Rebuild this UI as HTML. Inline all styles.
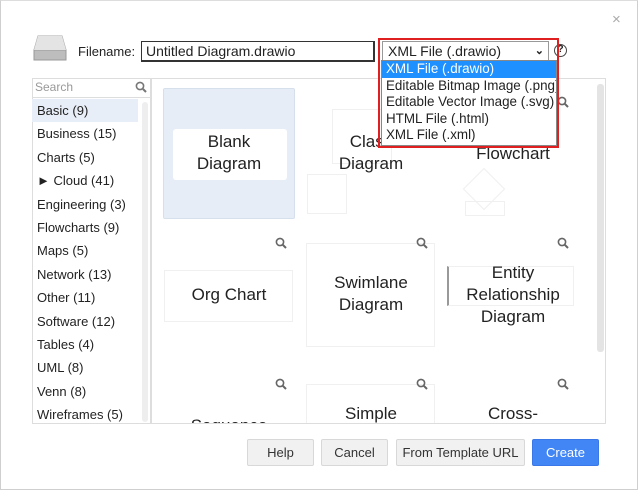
<!DOCTYPE html>
<html><head><style>
*{margin:0;padding:0;box-sizing:border-box}
body{width:640px;height:492px;background:#fff;position:relative;overflow:hidden;font-family:"Liberation Sans",sans-serif;color:#222}
.a{position:absolute}
.lst div{height:23.4px;line-height:23.4px;padding-left:5px;font-size:13px;white-space:nowrap}
.lbl{position:absolute;text-align:center;font-size:17px;line-height:22px;color:#222}
.btn{position:absolute;top:439px;height:27px;border:1px solid #d8d8d8;background:#f1f1f1;font-size:13px;line-height:25px;text-align:center;color:#333;border-radius:2px}
.mag{position:absolute;width:12px;height:12px}
.ghost{position:absolute;border:1px solid #f0f0f0}
.dd div{white-space:nowrap;padding-left:4px;height:16.6px}
</style></head><body>
<div class="a" style="left:0;top:0;width:638px;height:490px;border:1px solid #cfcfcf;border-top-color:#ddd"></div>
<div class="a" style="left:612px;top:11px;font-size:15px;color:#aaa">×</div>
<svg class="a" style="left:32px;top:34px" width="36" height="28" viewBox="0 0 36 28"><path d="M6 2 H30 L34 16 V26 H2 V16 Z" fill="#d4d4d4" stroke="#aaa"/><rect x="2" y="16" width="32" height="10" fill="#bdbdbd" stroke="#999"/><path d="M6 2 L2 16 H34 L30 2Z" fill="#e4e4e4"/></svg>
<div class="a" style="left:78px;top:44px;font-size:13px">Filename:</div>
<div class="a" style="left:141px;top:41px;width:234px;height:21px;border:1px solid #333;border-width:1px 2px 2px 1px;font-size:14px;line-height:18px;padding-left:4px">Untitled Diagram.drawio</div>
<div class="a" style="left:382px;top:41px;width:167px;height:20px;border:1px solid #999;font-size:14px;line-height:18px;padding-left:5px">XML File (.drawio)<span style="position:absolute;right:4px;top:0;font-size:11px;font-weight:bold">&#8964;</span></div>
<div class="a" style="left:554px;top:44px;width:13px;height:13px;border:1.5px solid #444;border-radius:50%;font-size:10px;line-height:10px;text-align:center;font-weight:bold">?</div>
<div class="a" style="left:32px;top:78px;width:119px;height:346px;border:1px solid #ddd"></div>
<div class="a" style="left:35px;top:80px;font-size:12px;color:#999">Search</div>
<svg class="a" style="left:135px;top:81px" width="12" height="12"><circle cx="5" cy="5" r="3.6" stroke="#777" stroke-width="1.6" fill="none"/><path d="M8 8 L11 11" stroke="#777" stroke-width="2"/></svg>
<div class="a" style="left:32px;top:97px;width:119px;border-top:1px solid #ddd"></div>
<div class="a" style="left:142px;top:102px;width:6px;height:320px;background:#eee;border-radius:3px"></div>
<div class="a lst" style="left:32px;top:99px;width:106px">
<div style="background:#e8eef7">Basic (9)</div><div>Business (15)</div><div>Charts (5)</div><div>&#9658; Cloud (41)</div><div>Engineering (3)</div><div>Flowcharts (9)</div><div>Maps (5)</div><div>Network (13)</div><div>Other (11)</div><div>Software (12)</div><div>Tables (4)</div><div>UML (8)</div><div>Venn (8)</div><div>Wireframes (5)</div></div>
<div class="a" style="left:151px;top:78px;width:455px;height:346px;border:1px solid #ddd;overflow:hidden">
<div class="a" style="left:445px;top:5px;width:7px;height:268px;background:#e4e4e4;border-radius:3px"></div>
<div class="a" style="left:11px;top:9px;width:132px;height:131px;background:#e6edf7;border:1px solid #d6e0ec;border-radius:2px"></div>
<div class="a" style="left:21px;top:50px;width:114px;height:51px;background:#fff;border-radius:3px"></div>
<div class="lbl" style="left:11px;top:52px;width:132px">Blank<br>Diagram</div>
<div class="ghost" style="left:180px;top:30px;width:60px;height:55px"></div>
<div class="ghost" style="left:155px;top:95px;width:40px;height:40px"></div>
<div class="lbl" style="left:153px;top:52px;width:132px">Class<br>Diagram</div>
<div class="ghost" style="left:317px;top:95px;width:30px;height:30px;transform:rotate(45deg)"></div>
<div class="ghost" style="left:313px;top:122px;width:40px;height:15px"></div>
<div class="lbl" style="left:295px;top:64px;width:132px">Flowchart</div>
<div class="ghost" style="left:12px;top:191px;width:129px;height:52px"></div>
<div class="lbl" style="left:11px;top:205px;width:132px">Org Chart</div>
<div class="ghost" style="left:154px;top:164px;width:129px;height:104px"></div>
<div class="lbl" style="left:153px;top:193px;width:132px">Swimlane<br>Diagram</div>
<div class="ghost" style="left:295px;top:187px;width:127px;height:40px;border-left:2px solid #999"></div>
<div class="lbl" style="left:295px;top:183px;width:132px">Entity<br>Relationship<br>Diagram</div>
<div class="ghost" style="left:154px;top:305px;width:129px;height:60px"></div>
<div class="lbl" style="left:11px;top:336px;width:132px">Sequence</div>
<div class="lbl" style="left:153px;top:324px;width:132px">Simple</div>
<div class="lbl" style="left:295px;top:324px;width:132px">Cross-</div>
</div>
<svg width="0" height="0"><defs><g id="m"><circle cx="5" cy="5" r="3.6" stroke="#666" stroke-width="1.6" fill="none"/><path d="M7.7 7.7 L11 11" stroke="#666" stroke-width="2"/></g></defs></svg>
<svg class="mag" style="left:275px;top:237px"><use href="#m"/></svg>
<svg class="mag" style="left:416px;top:237px"><use href="#m"/></svg>
<svg class="mag" style="left:557px;top:237px"><use href="#m"/></svg>
<svg class="mag" style="left:557px;top:96px"><use href="#m"/></svg>
<svg class="mag" style="left:275px;top:378px"><use href="#m"/></svg>
<svg class="mag" style="left:416px;top:378px"><use href="#m"/></svg>
<svg class="mag" style="left:557px;top:378px"><use href="#m"/></svg>
<div class="a dd" style="left:381px;top:60px;width:176px;height:86px;background:#fff;border:1px solid #888;font-size:13.4px;line-height:16.6px;overflow:hidden">
<div style="background:#1e90ff;color:#fff">XML File (.drawio)</div>
<div>Editable Bitmap Image (.png)</div>
<div>Editable Vector Image (.svg)</div>
<div>HTML File (.html)</div>
<div>XML File (.xml)</div></div>
<div class="a" style="left:378px;top:38px;width:181px;height:110px;border:2px solid #e02020"></div>
<div class="btn" style="left:247px;width:67px">Help</div>
<div class="btn" style="left:321px;width:67px">Cancel</div>
<div class="btn" style="left:396px;width:129px">From Template URL</div>
<div class="btn" style="left:532px;width:67px;background:#4285f4;border-color:#3b78e7;color:#fff">Create</div>
</body></html>
